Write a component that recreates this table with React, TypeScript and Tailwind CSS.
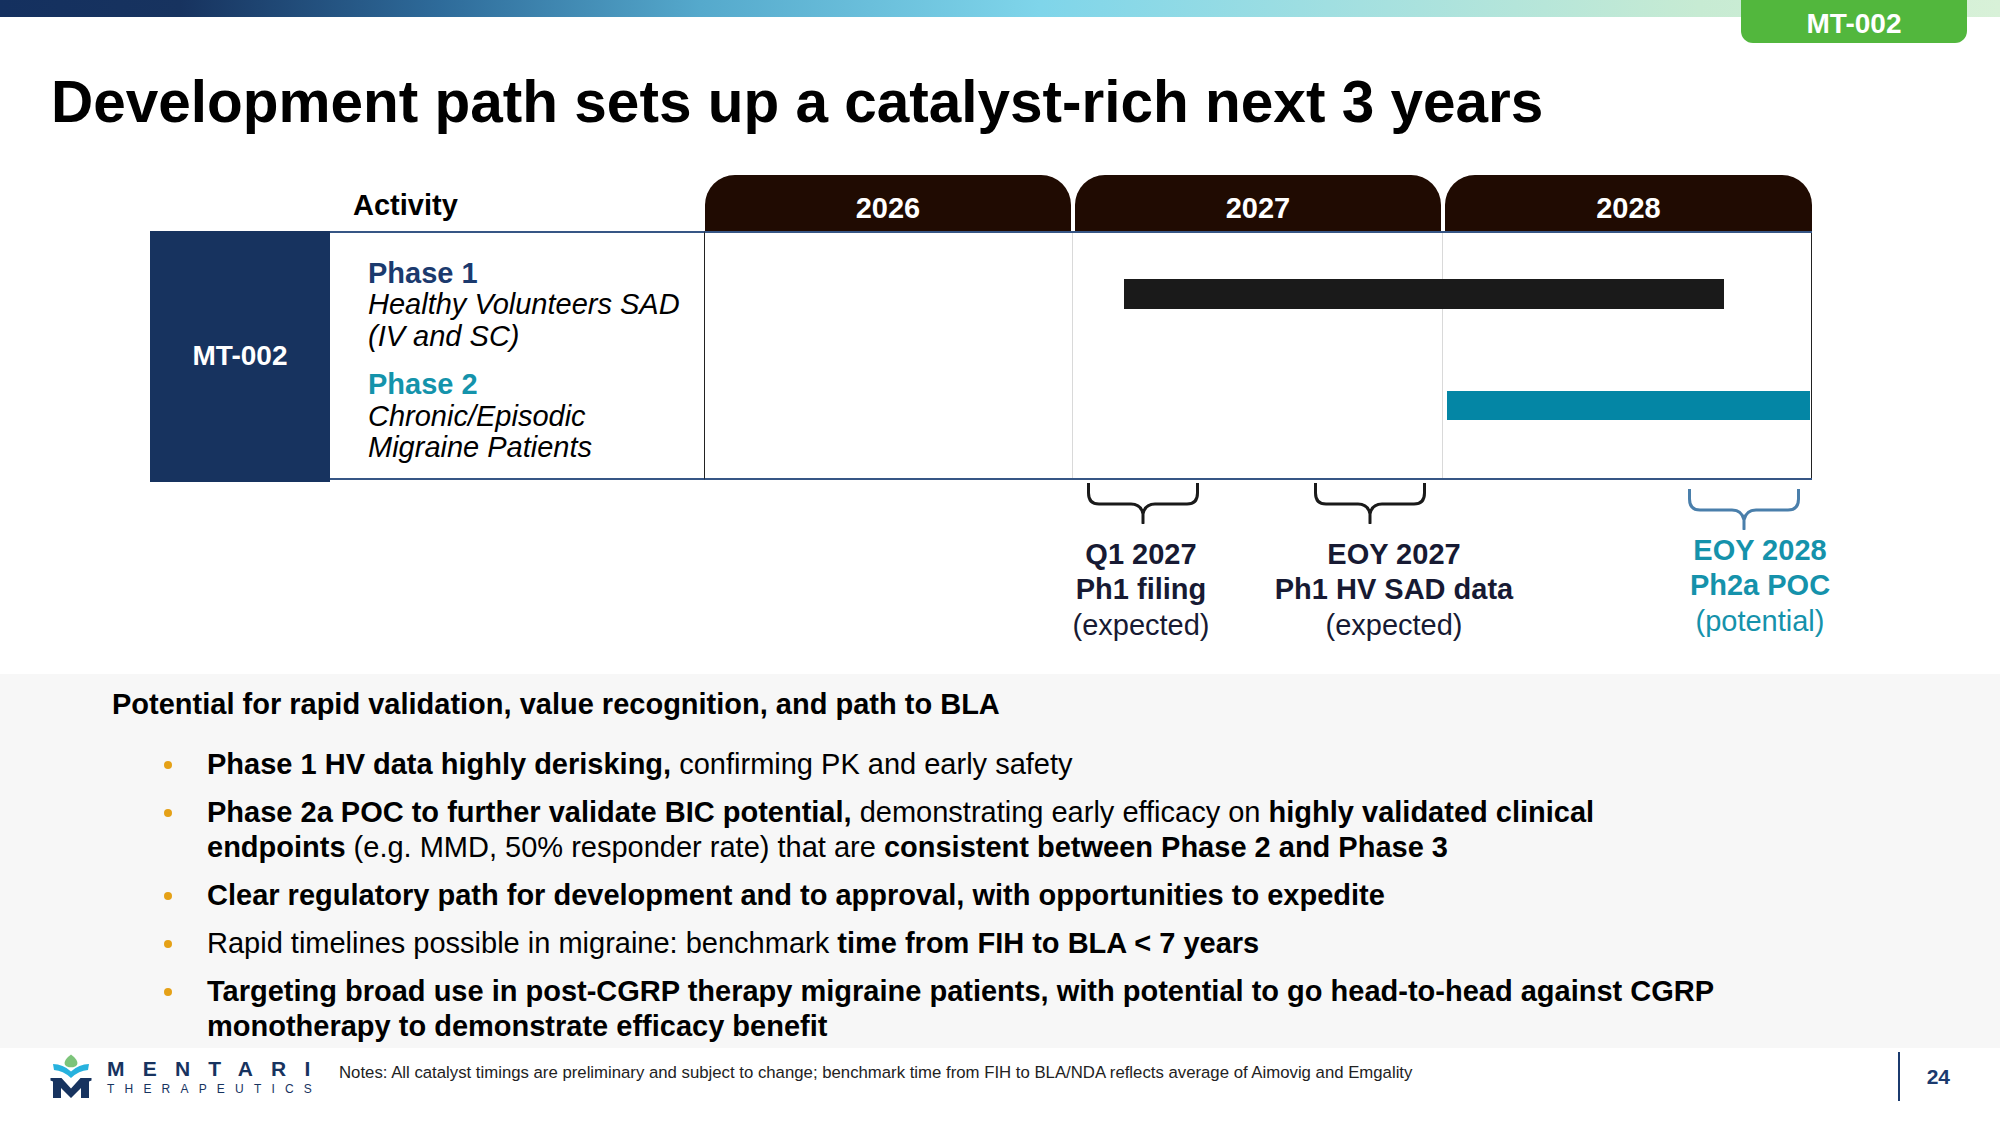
import React from "react";

const years = ["2026", "2027", "2028"];

type Part = { t: string; b?: boolean };

// each bullet is a list of lines, each line a list of runs
const bullets: Part[][][] = [
  [[{ t: "Phase 1 HV data highly derisking,", b: true }, { t: " confirming PK and early safety" }]],
  [
    [
      { t: "Phase 2a POC to further validate BIC potential,", b: true },
      { t: " demonstrating early efficacy on " },
      { t: "highly validated clinical", b: true },
    ],
    [
      { t: "endpoints", b: true },
      { t: " (e.g. MMD, 50% responder rate) that are " },
      { t: "consistent between Phase 2 and Phase 3", b: true },
    ],
  ],
  [[{ t: "Clear regulatory path for development and to approval, with opportunities to expedite", b: true }]],
  [[{ t: "Rapid timelines possible in migraine: benchmark " }, { t: "time from FIH to BLA < 7 years", b: true }]],
  [
    [{ t: "Targeting broad use in post-CGRP therapy migraine patients, with potential to go head-to-head against CGRP", b: true }],
    [{ t: "monotherapy to demonstrate efficacy benefit", b: true }],
  ],
];

function Brace({ color, className }: { color: string; className?: string }) {
  return (
    <svg width="112" height="41" viewBox="0 0 112 41" className={className} fill="none">
      <path
        d="M1.5 0 V10 Q1.5 21 12 21 H44 Q54 21 56 31 V40 M110.5 0 V10 Q110.5 21 100 21 H68 Q58 21 56 31"
        stroke={color}
        strokeWidth="3"
        strokeLinecap="round"
        strokeLinejoin="round"
      />
    </svg>
  );
}

function Logo() {
  return (
    <div className="flex w-[289px] shrink-0">
      <svg width="42" height="46" viewBox="0 0 42 46" className="mt-[5px]">
        <path
          d="M21 1.5 C25 4.5 28 8 27.3 11 C26.6 13.6 23.6 14.3 21 14.3 C18.4 14.3 15.4 13.6 14.7 11 C14 8 17 4.5 21 1.5 Z"
          fill="#7cc47a"
        />
        <path d="M3 11 Q13 11 21 18.5 Q29 11 39 11 L38 17 Q29 17.5 21 25 Q13 17.5 4 17 Z" fill="#27b2de" />
        <path
          d="M0.5 25 L11.5 25 L21 35.5 L30.5 25 L41.5 25 L41.5 27.5 L39 28.5 L39 45 L31 45 L31 35 L21 45 L11 35 L11 45 L3 45 L3 28.5 L0.5 27.5 Z"
          fill="#17335f"
        />
      </svg>
      <div className="ml-[15px] mt-[10px] flex flex-col">
        <div className="text-[21px] leading-none font-bold tracking-[18.2px] text-[#17335f]">MENTARI</div>
        <div className="mt-[4px] text-[12px] leading-none tracking-[10.2px] text-[#17335f]">THERAPEUTICS</div>
      </div>
    </div>
  );
}

export default function App() {
  return (
    <div className="relative w-[2000px] h-[1125px] overflow-hidden bg-white font-['Liberation_Sans',Arial,sans-serif] text-black">
      {/* top gradient strip */}
      <div className="h-[17px] w-full bg-[linear-gradient(90deg,#14305f_0%,#17335f_9%,#2e6b9a_22%,#55a9cc_35%,#7fd5ea_52%,#a4e0e0_68%,#c7ebd3_85%,#d8f1d8_100%)]" />
      <div className="absolute top-0 left-[1741px] w-[226px] h-[43px] rounded-b-[12px] bg-[#52b73d] flex justify-center pt-[10px]">
        <span className="text-[28px] leading-none font-bold text-white">MT-002</span>
      </div>

      <h1 className="mt-[56px] pl-[51px] text-[58.5px] leading-none font-bold">
        Development path sets up a catalyst-rich next 3 years
      </h1>

      {/* timeline table */}
      <div className="mt-[43px] ml-[150px] w-[1662px]">
        <div className="grid grid-cols-[180px_375px_368px_370px_369px] h-[56px]">
          <div />
          <div className="pt-[16px] pl-[23px] text-[29px] leading-none font-bold">Activity</div>
          {years.map((y, i) => (
            <div
              key={y}
              className={
                "rounded-t-[30px] bg-[#200b02] flex justify-center pt-[19px] " +
                (i === 0 ? "mr-[2px]" : i === 1 ? "mx-[2px]" : "ml-[2px]")
              }
            >
              <span className="text-[29px] leading-none font-bold text-white">{y}</span>
            </div>
          ))}
        </div>

        <div className="grid grid-cols-[180px_375px_1107px] items-start">
          <div className="h-[251px] bg-[#17335f] flex items-center justify-center">
            <span className="text-[28px] leading-none font-bold text-white">MT-002</span>
          </div>
          <div className="h-[249px] border-y-2 border-y-[#365685] border-r-[1.5px] border-r-[#222] pt-[25px] pl-[38px] text-[29px] leading-[31.5px]">
            <div className="font-bold text-[#1b3a6e]">Phase 1</div>
            <div className="italic">Healthy Volunteers SAD</div>
            <div className="italic">(IV and SC)</div>
            <div className="mt-[17px] font-bold text-[#1493ab]">Phase 2</div>
            <div className="italic">Chronic/Episodic</div>
            <div className="italic">Migraine Patients</div>
          </div>
          <div className="relative h-[249px] border-y-2 border-y-[#365685]">
            <div className="grid grid-cols-[368px_370px_369px] h-full">
              <div className="border-r border-r-[#d9d9d9]" />
              <div className="border-r border-r-[#d9d9d9]" />
              <div className="border-r-[1.5px] border-r-[#222]" />
            </div>
            <div className="absolute left-[419px] top-[46px] w-[600px] h-[30px] bg-[#1a1a1a]" />
            <div className="absolute left-[742px] top-[158px] w-[363px] h-[29px] bg-[#0486a5]" />
          </div>
        </div>
      </div>

      {/* catalysts */}
      <div className="h-[192px]">
        <div className="flex items-start pl-[1087px] pt-[1px] h-[44px]">
          <Brace color="#1a1a1a" />
          <Brace color="#1a1a1a" className="ml-[115px]" />
          <Brace color="#4a7fab" className="ml-[262px] mt-[6px]" />
        </div>
        <div className="flex items-start pl-[1021px] mt-[7px] text-[29px] leading-[35.5px] text-center">
          <div className="w-[240px] mt-[4px] text-[#171a33]">
            <div className="font-bold">Q1 2027</div>
            <div className="font-bold">Ph1 filing</div>
            <div>(expected)</div>
          </div>
          <div className="w-[260px] ml-[3px] mt-[4px] text-[#171a33]">
            <div className="font-bold">EOY 2027</div>
            <div className="font-bold">Ph1 HV SAD data</div>
            <div>(expected)</div>
          </div>
          <div className="w-[240px] ml-[116px] text-[#1592ab]">
            <div className="font-bold">EOY 2028</div>
            <div className="font-bold">Ph2a POC</div>
            <div>(potential)</div>
          </div>
        </div>
      </div>

      {/* summary */}
      <div className="h-[374px] bg-[#f7f7f7] pt-[13px] text-[29px] leading-[35px]">
        <div className="pl-[112px] font-bold">Potential for rapid validation, value recognition, and path to BLA</div>
        <div className="mt-[25px] pl-[160px] flex flex-col gap-[13px]">
          {bullets.map((lines, i) => (
            <div key={i} className="flex items-start">
              <span className="mt-[14px] ml-[4px] w-[8px] h-[8px] rounded-full bg-[#e5a117] shrink-0" />
              <div className="ml-[35px] w-[1525px]">
                {lines.map((line, k) => (
                  <div key={k} className="whitespace-pre">
                    {line.map((p, j) => (
                      <span key={j} className={p.b ? "font-bold" : ""}>
                        {p.t}
                      </span>
                    ))}
                  </div>
                ))}
              </div>
            </div>
          ))}
        </div>
      </div>

      {/* footer */}
      <div className="flex items-start h-[78px] pl-[50px]">
        <Logo />
        <p className="mt-[17px] text-[16.75px] leading-none text-[#222]">
          Notes: All catalyst timings are preliminary and subject to change; benchmark time from FIH to BLA/NDA reflects
          average of Aimovig and Emgality
        </p>
        <div className="ml-auto mr-[50px] flex items-start">
          <div className="mt-[4px] w-[2px] h-[49px] bg-[#1b3a6e]" />
          <span className="ml-[27px] mt-[18px] text-[21px] leading-none font-bold text-[#1b3a6e]">24</span>
        </div>
      </div>
    </div>
  );
}
